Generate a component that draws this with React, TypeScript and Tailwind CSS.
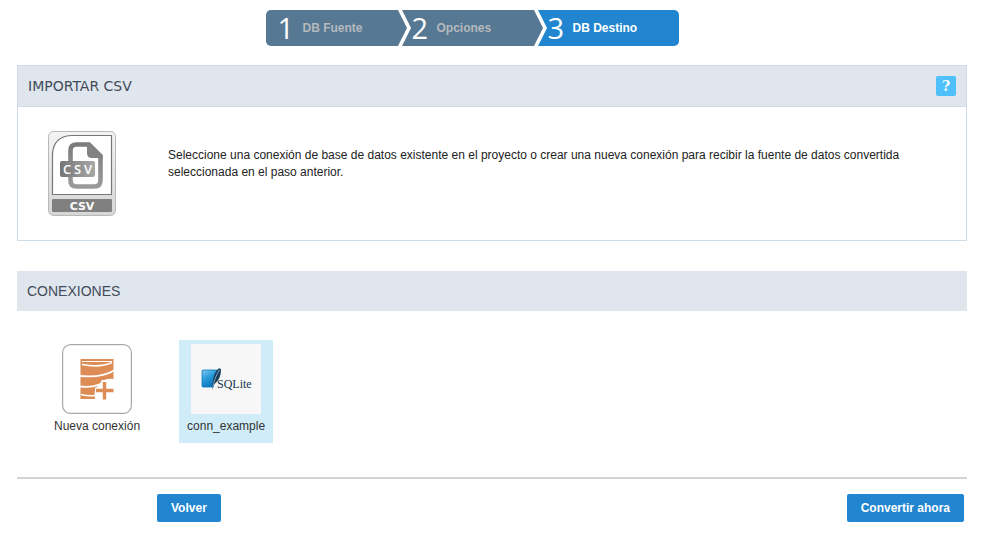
import React from "react";

type Step = { number: string; label: string; active?: boolean };

const steps: Step[] = [
  { number: "1", label: "DB Fuente" },
  { number: "2", label: "Opciones" },
  { number: "3", label: "DB Destino", active: true },
];

const stepShapes = ["w-[134px] rounded-l-[5px]", "w-[136px]", "w-[143px] rounded-r-[5px]"];

function StepDivider() {
  return (
    <svg className="absolute top-0 left-full z-10 -ml-1" width="16" height="36" viewBox="-4 0 16 36" aria-hidden="true">
      <path d="M-1 0H0L8 18L0 36H-1Z" fill="#567893" />
      <path d="M-1 -2L9 18L-1 38" fill="none" stroke="#fff" strokeWidth="3.6" />
    </svg>
  );
}

function Stepper() {
  return (
    <ol className="flex h-9 justify-center pr-10">
      {steps.map((s, i) => (
        <li
          key={s.number}
          aria-current={s.active ? "step" : undefined}
          className={`relative flex items-center pl-3 ${stepShapes[i]} ${s.active ? "bg-[#2185d0] text-white" : "bg-[#567893] text-[#b4b9bd]"}`}
        >
          <span className="w-[25px] font-['Open_Sans',sans-serif] text-[29px] leading-9 text-white">{s.number}</span>
          <span className="text-xs font-bold">{s.label}</span>
          {i < steps.length - 1 && <StepDivider />}
        </li>
      ))}
    </ol>
  );
}

function CsvIcon() {
  return (
    <svg width="68" height="85" viewBox="0 0 68 85" role="img" aria-label="CSV">
      <defs>
        <linearGradient id="csvFrame" x1="0" y1="0" x2="0" y2="1">
          <stop offset="0" stopColor="#f4f4f4" />
          <stop offset="1" stopColor="#d6d6d6" />
        </linearGradient>
        <linearGradient id="csvTag" x1="0" y1="0" x2="1" y2="0">
          <stop offset="0" stopColor="#767676" />
          <stop offset="1" stopColor="#a8a8a8" />
        </linearGradient>
        <linearGradient id="csvPage" x1="0" y1="0" x2="0" y2="1">
          <stop offset="0" stopColor="#7c7c7c" />
          <stop offset="1" stopColor="#9a9a9a" />
        </linearGradient>
      </defs>
      <rect x="0.5" y="0.5" width="67" height="84" rx="5" fill="url(#csvFrame)" stroke="#b9b9b9" />
      <path d="M4.500 63.500V23Q5.500 5.500 23 4.500H63.500V63.500Z" fill="#fff" stroke="#777" strokeWidth="1.200" />
      <path d="M22.500 31V19.500Q22.500 13.500 28.500 13.500H41L52.500 25V49Q52.500 55.500 46.500 55.500H28.500Q22.500 55.500 22.500 49.500V45" fill="none" stroke="url(#csvPage)" strokeWidth="4.600" />
      <path d="M39 11.500H41L55 25.500V27H44Q39 27 39 22Z" fill="#828282" />
      <rect x="12" y="30" width="35" height="16" rx="2" fill="url(#csvTag)" />
      <text y="43" fontFamily="Open Sans, sans-serif" fontSize="13" fontWeight="600" fill="#fff">
        <tspan x="15">C</tspan>
        <tspan x="26">S</tspan>
        <tspan x="36">V</tspan>
      </text>
      <rect x="4" y="68" width="60" height="13" rx="1" fill="#808080" />
      <text x="34" y="79" textAnchor="middle" fontFamily="DejaVu Sans, sans-serif" fontSize="11" fontWeight="700" fill="#fff">CSV</text>
    </svg>
  );
}

function NewConnectionIcon() {
  return (
    <svg width="70" height="70" viewBox="0 0 70 70" aria-hidden="true">
      <rect x="0.6" y="0.6" width="68.800" height="68.800" rx="8" fill="#fff" stroke="#a8a8a8" strokeWidth="1.200" />
      <path d="M18.500 15H51.500V35Q44 34 39 38Q33 43 32.500 50L33 55H18.500Z" fill="#de8c55" />
      <path d="M20 17.500H50" fill="none" stroke="#fff" strokeWidth="1" />
      <path d="M20 20.500Q38 24 50 18.500" fill="none" stroke="#fff" strokeWidth="1.600" />
      <path d="M18 32Q40 34 52 26.500" fill="none" stroke="#fff" strokeWidth="1.800" />
      <path d="M18 42.500Q29 44 37 40.500" fill="none" stroke="#fff" strokeWidth="1.800" />
      <path d="M19 50.500Q27 52.500 33 51.500" fill="none" stroke="#fff" strokeWidth="1.500" />
      <path d="M42.500 36V57M33 46.500H52" fill="none" stroke="#fff" strokeWidth="6" />
      <path d="M42.500 38V55.500M34 46.500H51.500" fill="none" stroke="#de8c55" strokeWidth="3.400" />
    </svg>
  );
}

function SqliteIcon() {
  return (
    <svg width="70" height="70" viewBox="0 0 70 70" aria-hidden="true">
      <defs>
        <linearGradient id="sqliteBlue" x1="0" y1="0" x2="0.500" y2="1">
          <stop offset="0" stopColor="#83c9ee" />
          <stop offset="0.500" stopColor="#2a9bdb" />
          <stop offset="1" stopColor="#0b75bb" />
        </linearGradient>
      </defs>
      <rect width="70" height="70" fill="#f7f7f7" />
      <path d="M12 26H26Q22 33 22.500 43H12Q11 43 11 42V27Q11 26 12 26Z" fill="url(#sqliteBlue)" stroke="#0878bb" strokeWidth="0.800" />
      <path d="M30 26Q29.500 23 27 25Q22 30 21.500 40L21 46L23.500 40Q30 35 30 26Z" fill="#173f5c" />
      <path d="M28.500 26Q23.500 33 21.500 45" fill="none" stroke="#b5cbdc" strokeWidth="0.700" />
      <text x="26" y="44" fontFamily="Liberation Serif, serif" fontSize="12" fill="#13364f">SQLite</text>
    </svg>
  );
}

function Connection({ name, selected, children }: { name: string; selected?: boolean; children: React.ReactNode }) {
  return (
    <button
      type="button"
      aria-pressed={!!selected}
      className={`flex h-[103px] flex-col items-center px-2 pt-1 ${selected ? "bg-[#d0ecf9]" : ""}`}
    >
      {children}
      <span className="mt-1 text-xs whitespace-nowrap text-[#333]">{name}</span>
    </button>
  );
}

function ActionButton({ children }: { children: React.ReactNode }) {
  return (
    <button type="button" className="h-7 rounded-xs bg-[#2185d0] px-3.5 text-xs font-bold text-white">
      {children}
    </button>
  );
}

export default function App() {
  return (
    <main className="bg-white pt-2.5 pr-[23px] pl-[17px] font-['Liberation_Sans',Arial,sans-serif] text-[#222]">
      <Stepper />

      <section className="mt-[19px] border border-[#d0dce5]">
        <header className="flex h-[41px] items-center justify-between border-b border-[#d0dce5] bg-[#dfe6ee] px-2.5">
          <h1 className="font-['DejaVu_Sans',Verdana,sans-serif] text-sm text-[#434b59]">IMPORTAR CSV</h1>
          <button
            type="button"
            aria-label="Ayuda"
            className="size-5 rounded-xs bg-[#4fc0fa] font-['DejaVu_Serif',serif] text-sm leading-5 font-bold text-white"
          >
            ?
          </button>
        </header>
        <div className="flex gap-[52px] pt-6 pr-[60px] pb-6 pl-[30px]">
          <div className="shrink-0">
            <CsvIcon />
          </div>
          <p className="pt-4 text-xs leading-[17px]">
            Seleccione una conexión de base de datos existente en el proyecto o crear una nueva conexión para recibir la
            fuente de datos convertida seleccionada en el paso anterior.
          </p>
        </div>
      </section>

      <section className="mt-[30px]">
        <h2 className="flex h-10 items-center bg-[#dfe6ee] px-2.5 text-sm text-[#434b59]">CONEXIONES</h2>
        <div className="mt-[29px] flex gap-[31px] pl-[29px]">
          <Connection name="Nueva conexión">
            <NewConnectionIcon />
          </Connection>
          <Connection name="conn_example" selected>
            <SqliteIcon />
          </Connection>
        </div>
      </section>

      <footer className="mt-[34px] flex justify-between border-t-2 border-[#d4d4d4] pt-[15px] pr-[3px] pl-[140px]">
        <ActionButton>Volver</ActionButton>
        <ActionButton>Convertir ahora</ActionButton>
      </footer>
    </main>
  );
}
